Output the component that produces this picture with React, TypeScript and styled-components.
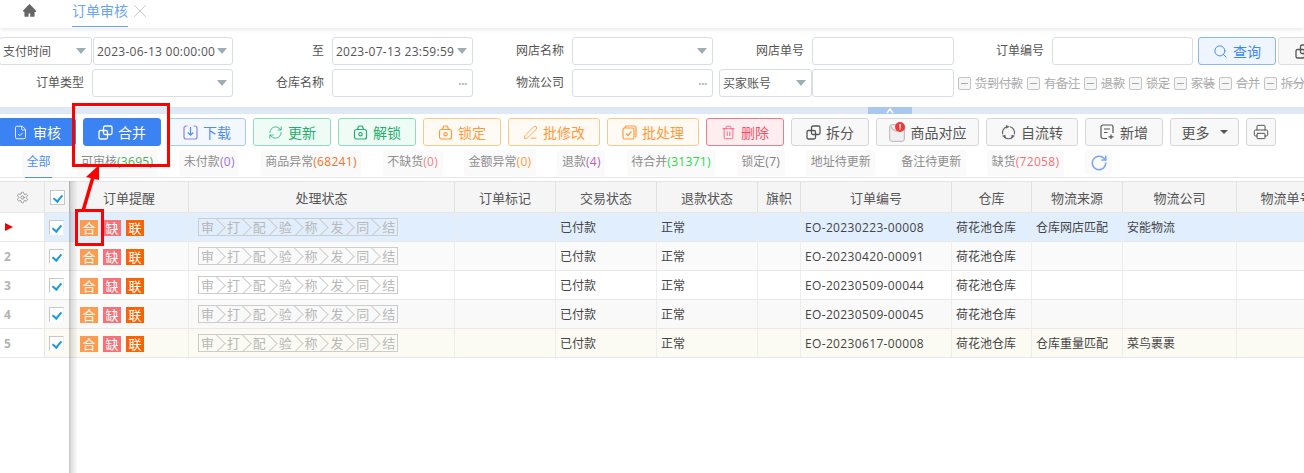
import styled, { createGlobalStyle } from 'styled-components';
import { AiFillHome } from 'react-icons/ai';
import { FileCheck, RefreshCw, PenLine, Trash2, Printer, Search, X, Settings, RotateCw } from 'lucide-react';

const FONT = `"Open Sans", "Noto Sans CJK SC", sans-serif`;
const COLUMNS = '45px 25px 119px 266px 101px 101px 101px 43px 151px 80px 91px 114px 100px';

const HEADERS = ['订单提醒', '处理状态', '订单标记', '交易状态', '退款状态', '旗帜', '订单编号', '仓库', '物流来源', '物流公司', '物流单号'];
const STEPS = ['审', '打', '配', '验', '称', '发', '同', '结'];

const ROWS = [
  { no: '', bg: '#e1eefd', order: 'EO-20230223-00008', source: '仓库网店匹配', company: '安能物流' },
  { no: '2', bg: '#fafafa', order: 'EO-20230420-00091', source: '', company: '' },
  { no: '3', bg: '#ffffff', order: 'EO-20230509-00044', source: '', company: '' },
  { no: '4', bg: '#f9f9f9', order: 'EO-20230509-00045', source: '', company: '' },
  { no: '5', bg: '#fbfbf3', order: 'EO-20230617-00008', source: '仓库重量匹配', company: '菜鸟裹裹' },
];

const TABS = [
  { label: '全部', active: true },
  { label: '可审核', count: '(3695)', color: '#4caf50' },
  { label: '未付款', count: '(0)', color: '#9a6fe0' },
  { label: '商品异常', count: '(68241)', color: '#f5722a' },
  { label: '不缺货', count: '(0)', color: '#f77f86' },
  { label: '金额异常', count: '(0)', color: '#ff9a3c' },
  { label: '退款', count: '(4)', color: '#b55fb5' },
  { label: '待合并', count: '(31371)', color: '#22dd44' },
  { label: '锁定', count: '(7)', color: '#808080' },
  { label: '地址待更新' },
  { label: '备注待更新' },
  { label: '缺货', count: '(72058)', color: '#f77277' },
];

const FLAGS = ['货到付款', '有备注', '退款', '锁定', '家装', '合并', '拆分'];

const TONES = {
  primary: { border: '#3b82f2', bg: '#3b82f2', text: '#ffffff' },
  blue: { border: '#a9c8f6', bg: '#f3f8ff', text: '#4d8ef5' },
  green: { border: '#8fdcbc', bg: '#effcf6', text: '#1fae6f' },
  orange: { border: '#fcc88c', bg: '#fffaf3', text: '#ff9a3c' },
  red: { border: '#ee7b8a', bg: '#ffeef0', text: '#f4506a' },
  plain: { border: '#d6d6d6', bg: '#f8f8f8', text: '#555555' },
};

type Tone = keyof typeof TONES;

const GlobalStyle = createGlobalStyle`
  html, body { margin: 0; padding: 0; background: #fff; overflow: hidden; }
  * { box-sizing: border-box; }
`;

// two overlapping squares, used by 合并 and 拆分
function OverlapIcon() {
  return (
    <svg width="15" height="15" viewBox="0 0 15 15" fill="none" stroke="currentColor" strokeWidth="1.3">
      <rect x="5.5" y="1" width="8.5" height="8.5" rx="1.5" />
      <rect x="1" y="5.5" width="8.5" height="8.5" rx="1.5" />
    </svg>
  );
}

function DownloadIcon() {
  return (
    <svg width="15" height="15" viewBox="0 0 15 15" fill="none" stroke="#8d84e8" strokeWidth="1.2">
      <path d="M4.5 1H3a2 2 0 0 0-2 2v9a2 2 0 0 0 2 2h9a2 2 0 0 0 2-2V3a2 2 0 0 0-2-2h-1.500" />
      <path d="M7.500 2v8M4.800 7.500l2.700 2.700 2.700-2.700" stroke="#4d8ef5" />
    </svg>
  );
}

function LockIcon() {
  return (
    <svg width="15" height="15" viewBox="0 0 15 15" fill="none" stroke="currentColor" strokeWidth="1.2">
      <rect x="1.500" y="4.500" width="12" height="9.500" rx="2" />
      <path d="M4.500 4.500l.8-2.700a1 1 0 0 1 1-.8h2.400a1 1 0 0 1 1 .8l.8 2.700" />
      <circle cx="7.500" cy="9.200" r="1.700" />
    </svg>
  );
}

function BatchIcon() {
  return (
    <svg width="15" height="15" viewBox="0 0 15 15" fill="none" stroke="currentColor" strokeWidth="1.2">
      <path d="M3 3V2.500A1.500 1.500 0 0 1 4.500 1h8A1.500 1.500 0 0 1 14 2.500v8a1.500 1.500 0 0 1-1 1.400" />
      <rect x="1" y="3" width="11" height="11" rx="1.500" />
      <path d="M4 8.500l2 2 3.500-4" />
    </svg>
  );
}

function MatchIcon() {
  return (
    <svg width="17" height="20" viewBox="0 0 17 20">
      <rect x="0.700" y="2.700" width="14.600" height="16.600" rx="2" fill="#efefef" stroke="#b5b5b5" />
      <path d="M2 4c1 4 4 5 7 5" fill="none" stroke="#c5c5c5" strokeWidth="1.500" />
      <circle cx="11" cy="5" r="5" fill="#f03a3a" />
      <rect x="10.400" y="2" width="1.300" height="3.800" fill="#fff" />
      <rect x="10.400" y="6.500" width="1.300" height="1.300" fill="#fff" />
    </svg>
  );
}

function FlowIcon() {
  return (
    <svg width="15" height="15" viewBox="0 0 15 15" fill="none" stroke="#666" strokeWidth="1.100">
      <path d="M6 1.800a6 6 0 0 0-4.300 7.500M3.300 12a6 6 0 0 0 8.400 0M13.300 9.300A6 6 0 0 0 9 1.800" />
      <path d="M7.500 1.800l-2 -1v2zM2.200 11l1.900 1.500-.1-2zM12.800 11l-1.900 1.500.1-2z" />
    </svg>
  );
}

function FilePlusIcon() {
  return (
    <svg width="15" height="16" viewBox="0 0 15 16" fill="none" stroke="currentColor" strokeWidth="1.200">
      <path d="M7 14.500H3a2 2 0 0 1-2-2V3a2 2 0 0 1 2-2h8a2 2 0 0 1 2 2v6" />
      <path d="M4 5h6M4 8.500h3.500M11 10.500v4.500M8.500 12.800h5" />
    </svg>
  );
}

function ToolButton({ tone, width, icon, label, arrow }: { tone: Tone; width: number; icon: React.ReactNode; label?: string; arrow?: boolean }) {
  return (
    <Tool $tone={tone} $width={width}>
      {icon}
      {label && <span>{label}</span>}
      {arrow && <MoreArrow />}
    </Tool>
  );
}

export default function App() {
  return (
    <Page>
      <GlobalStyle />
      <TabBar>
        <HomeTab><AiFillHome size={15} /></HomeTab>
        <OpenTab>订单审核</OpenTab>
        <TabClose><X size={22} strokeWidth={0.9} /></TabClose>
      </TabBar>

      <FilterPanel>
        <FilterRow>
          <SelectBox $width={93} $flat><span>支付时间</span><Caret /></SelectBox>
          <SelectBox $width={140}><DateText>2023-06-13 00:00:00</DateText><Caret /></SelectBox>
          <FieldLabel>至</FieldLabel>
          <SelectBox $width={141}><DateText>2023-07-13 23:59:59</DateText><Caret /></SelectBox>
          <FieldLabel>网店名称</FieldLabel>
          <SelectBox $width={141}><span /><Caret /></SelectBox>
          <FieldLabel>网店单号</FieldLabel>
          <SelectBox $width={142} />
          <FieldLabel $width={98}>订单编号</FieldLabel>
          <SelectBox $width={141} />
          <QueryButton><Search size={15} strokeWidth={1.500} />查询</QueryButton>
          <CutButton><OverlapIcon /></CutButton>
        </FilterRow>
        <FilterRow>
          <FieldLabel $width={92}>订单类型</FieldLabel>
          <SelectBox $width={141}><span /><Caret /></SelectBox>
          <FieldLabel>仓库名称</FieldLabel>
          <SelectBox $width={141}><span /><Dots>•••</Dots></SelectBox>
          <FieldLabel>物流公司</FieldLabel>
          <SelectBox $width={141}><span /><Dots>•••</Dots></SelectBox>
          <BuyerSelect><span>买家账号</span><Caret /></BuyerSelect>
          <SelectBox $width={142} />
          <Flags>
            {FLAGS.map((flag) => (
              <Flag key={flag}><FlagBox />{flag}</Flag>
            ))}
          </Flags>
        </FilterRow>
      </FilterPanel>

      <Splitter>
        <SplitterHandle>
          <svg width="10" height="7" viewBox="0 0 10 7" fill="none" stroke="#fff" strokeWidth="1.500">
            <path d="M2 6l3-4 3 4" />
          </svg>
        </SplitterHandle>
      </Splitter>

      <Toolbar>
        <ToolButton tone="primary" width={78} icon={<FileCheck size={15} strokeWidth={1.400} />} label="审核" />
        <ToolButton tone="primary" width={78} icon={<OverlapIcon />} label="合并" />
        <ToolButton tone="blue" width={78} icon={<DownloadIcon />} label="下载" />
        <ToolButton tone="green" width={78} icon={<RefreshCw size={15} strokeWidth={1.300} />} label="更新" />
        <ToolButton tone="green" width={78} icon={<LockIcon />} label="解锁" />
        <ToolButton tone="orange" width={78} icon={<LockIcon />} label="锁定" />
        <ToolButton tone="orange" width={92} icon={<PenLine size={15} strokeWidth={1.400} />} label="批修改" />
        <ToolButton tone="orange" width={92} icon={<BatchIcon />} label="批处理" />
        <ToolButton tone="red" width={78} icon={<Trash2 size={15} strokeWidth={1.300} />} label="删除" />
        <ToolButton tone="plain" width={78} icon={<OverlapIcon />} label="拆分" />
        <ToolButton tone="plain" width={103} icon={<MatchIcon />} label="商品对应" />
        <ToolButton tone="plain" width={92} icon={<FlowIcon />} label="自流转" />
        <ToolButton tone="plain" width={78} icon={<FilePlusIcon />} label="新增" />
        <ToolButton tone="plain" width={69} icon={null} label="更多" arrow />
        <ToolButton tone="plain" width={30} icon={<Printer size={16} strokeWidth={1.500} />} />
      </Toolbar>

      <TabStrip>
        {TABS.map((tab) => (
          <StatusTab key={tab.label} $active={tab.active}>
            {tab.label}
            {tab.count && <Count $color={tab.color}>{tab.count}</Count>}
          </StatusTab>
        ))}
        <Reload><RotateCw size={18} strokeWidth={2} /></Reload>
      </TabStrip>

      <TableWrap>
        <HeadRow>
          <HeadCell><Settings size={13} strokeWidth={1.500} color="#888" /></HeadCell>
          <HeadCell><CheckBox $solid /></HeadCell>
          {HEADERS.map((title) => (
            <HeadCell key={title}>{title}</HeadCell>
          ))}
        </HeadRow>
        {ROWS.map((row) => (
          <BodyRow key={row.order} $bg={row.bg}>
            <NumberCell>{row.no || <CurrentMark />}</NumberCell>
            <CheckCell><CheckBox /></CheckCell>
            <Cell $gap>
              <Tag $bg="#fd9c50">合</Tag>
              <Tag $bg="#f77277">缺</Tag>
              <Tag $bg="#fb6302">联</Tag>
            </Cell>
            <Cell $pad={9}>
              <Steps>
                {STEPS.map((step) => <Step key={step}>{step}</Step>)}
              </Steps>
            </Cell>
            <Cell />
            <Cell>已付款</Cell>
            <Cell>正常</Cell>
            <Cell />
            <Cell><OrderNo>{row.order}</OrderNo></Cell>
            <Cell>荷花池仓库</Cell>
            <Cell>{row.source}</Cell>
            <Cell>{row.company}</Cell>
            <Cell />
          </BodyRow>
        ))}
        <FrozenShadow />
      </TableWrap>

      <BigMark />
      <SmallMark />
      <ArrowMark width="40" height="60" viewBox="0 0 40 60">
        <path d="M2 46L12 12" stroke="#f00" strokeWidth="3.500" />
        <path d="M18 0L5 12l13 3z" fill="#f00" />
      </ArrowMark>
    </Page>
  );
}

const Page = styled.div`
  position: relative;
  width: 1304px;
  height: 473px;
  overflow: hidden;
  display: flex;
  flex-direction: column;
  background: #fff;
  font-family: ${FONT};
  font-size: 12px;
  color: #555;
`;

const TabBar = styled.div`
  flex: 0 0 28px;
  display: flex;
  align-items: flex-start;
  box-shadow: 0 2px 4px rgba(0, 0, 0, 0.08);
`;

const HomeTab = styled.div`
  margin: 3px 0 0 22px;
  color: #666;
  line-height: 0;
`;

const OpenTab = styled.div`
  margin-left: 35px;
  width: 56px;
  height: 27px;
  line-height: 21px;
  font-size: 14px;
  color: #6ba3f7;
  border-bottom: 1px solid #6ba3f7;
`;

const TabClose = styled.div`
  margin: 0 0 0 1px;
  color: #b5bac0;
  line-height: 0;
`;

const FilterPanel = styled.div`
  flex: 0 0 79px;
  padding-top: 9px;
  display: flex;
  flex-direction: column;
  gap: 4px;
`;

const FilterRow = styled.div`
  display: flex;
  height: 28px;
  white-space: nowrap;
`;

const FieldLabel = styled.div<{ $width?: number }>`
  flex: 0 0 ${(p) => p.$width ?? 99}px;
  padding-right: 8px;
  text-align: right;
  line-height: 28px;
`;

const SelectBox = styled.div<{ $width: number; $flat?: boolean }>`
  flex: 0 0 ${(p) => p.$width}px;
  margin-left: ${(p) => (p.$flat ? '-1px' : '0')};
  margin-right: ${(p) => (p.$flat ? '1px' : '0')};
  display: flex;
  align-items: center;
  justify-content: space-between;
  padding: 0 5px 0 3px;
  border: 1px solid #d9dee3;
  border-radius: 3px;
  color: #555;
  background: #fff;
`;

const DateText = styled.span`
  letter-spacing: 0.26px;
`;

const BuyerSelect = styled(SelectBox).attrs({ $width: 93 })`
  margin-left: 6px;
`;

const Caret = styled.i`
  width: 0;
  height: 0;
  flex-shrink: 0;
  border-left: 5px solid transparent;
  border-right: 5px solid transparent;
  border-top: 6px solid #9cadb5;
`;

const Dots = styled.span`
  font-size: 9px;
  letter-spacing: -0.5px;
  color: #a9b4bb;
`;

const QueryButton = styled.button`
  flex: 0 0 78px;
  margin-left: 5px;
  display: flex;
  align-items: center;
  justify-content: center;
  gap: 5px;
  font: 14px ${FONT};
  color: #3f86f5;
  background: #eef5ff;
  border: 1px solid #8ab8f8;
  border-radius: 3px;
  padding: 0;
`;

const CutButton = styled.button`
  flex: 0 0 78px;
  margin-left: 2px;
  display: flex;
  align-items: center;
  padding: 0 0 0 16px;
  color: #555;
  background: #f8f8f8;
  border: 1px solid #ddd;
  border-radius: 3px;
`;

const Flags = styled.div`
  display: flex;
  align-items: center;
  gap: 4px;
  margin-left: 4px;
`;

const Flag = styled.label`
  display: flex;
  align-items: center;
  gap: 4px;
  color: #a8a8a8;
  text-decoration: line-through;
  text-decoration-color: #c4c4c4;
`;

const FlagBox = styled.i`
  position: relative;
  width: 13px;
  height: 13px;
  border: 1px solid #c4c4c4;
  border-radius: 2px;
  background: #f6f6f6;
  &::after {
    content: '';
    position: absolute;
    left: 2px;
    right: 2px;
    top: 5px;
    height: 1px;
    background: #a8a8a8;
  }
`;

const Splitter = styled.div`
  flex: 0 0 7px;
  display: flex;
  background: #dfe8f5;
`;

const SplitterHandle = styled.div`
  margin-left: 868px;
  width: 44px;
  display: flex;
  align-items: flex-start;
  justify-content: center;
  background: #a9c8f0;
`;

const Toolbar = styled.div`
  flex: 0 0 28px;
  margin: 4px 0 0 -2px;
  display: flex;
  gap: 7px;
`;

const Tool = styled.button<{ $tone: Tone; $width: number }>`
  flex: 0 0 ${(p) => p.$width}px;
  display: flex;
  align-items: center;
  justify-content: center;
  gap: 5px;
  padding: 0;
  font: 14px ${FONT};
  color: ${(p) => TONES[p.$tone].text};
  background: ${(p) => TONES[p.$tone].bg};
  border: 1px solid ${(p) => TONES[p.$tone].border};
  border-radius: 3px;
`;

const MoreArrow = styled.i`
  margin-left: 5px;
  border-left: 4px solid transparent;
  border-right: 4px solid transparent;
  border-top: 4px solid #555;
`;

const TabStrip = styled.div`
  flex: 0 0 28px;
  margin-top: 4px;
  padding-left: 22px;
  display: flex;
  align-items: flex-start;
  gap: 21.500px;
  border-bottom: 1px solid #e5e5e5;
  white-space: nowrap;
`;

const StatusTab = styled.div<{ $active?: boolean }>`
  position: relative;
  height: 26px;
  line-height: 24px;
  padding: 0 4.500px;
  border-radius: 3px;
  background: #fafafa;
  color: ${(p) => (p.$active ? '#4c8ff5' : '#8e8e8e')};
  &::after {
    content: '';
    display: ${(p) => (p.$active ? 'block' : 'none')};
    position: absolute;
    left: 3px;
    right: 3px;
    bottom: -2px;
    height: 1px;
    background: #4c8ff5;
  }
`;

const Count = styled.span<{ $color?: string }>`
  color: ${(p) => p.$color};
  letter-spacing: 0.3px;
`;

const Reload = styled.div`
  width: 27px;
  height: 25px;
  display: flex;
  align-items: center;
  justify-content: center;
  border-radius: 3px;
  background: #fafafa;
  color: #78a5f5;
`;

const TableWrap = styled.div`
  position: relative;
  flex: 1;
  margin-top: 3px;
  min-height: 0;
`;

const HeadRow = styled.div`
  display: grid;
  grid-template-columns: ${COLUMNS};
  height: 32px;
  background: #f5f5f5;
  border-top: 1px solid #e4e4e4;
  border-bottom: 1px solid #e8e8e8;
`;

const HeadCell = styled.div`
  display: flex;
  align-items: center;
  justify-content: center;
  font-size: 13px;
  color: #555;
  border-right: 1px solid #e0e0e0;
  white-space: nowrap;
  overflow: hidden;
`;

const BodyRow = styled.div<{ $bg: string }>`
  display: grid;
  grid-template-columns: ${COLUMNS};
  height: 29px;
  background: ${(p) => p.$bg};
  border-bottom: 1px solid #e8e8e8;
`;

const Cell = styled.div<{ $gap?: boolean; $pad?: number }>`
  display: flex;
  align-items: center;
  gap: ${(p) => (p.$gap ? '5px' : '0')};
  padding-left: ${(p) => p.$pad ?? (p.$gap ? 10 : 4)}px;
  border-right: 1px solid #ededed;
  color: #444;
  white-space: nowrap;
  overflow: hidden;
`;

const OrderNo = styled.span`
  letter-spacing: 0.35px;
`;

const NumberCell = styled.div`
  display: flex;
  align-items: center;
  padding-left: 4px;
  background: #fff;
  border-right: 1px solid #e8e8e8;
  font-weight: 700;
  color: #b4b4b4;
`;

const CurrentMark = styled.i`
  margin-left: 1px;
  border-top: 4px solid transparent;
  border-bottom: 4px solid transparent;
  border-left: 8px solid #f00000;
`;

const CheckCell = styled.div`
  display: flex;
  align-items: center;
  padding-left: 4px;
`;

const CheckBox = styled.i<{ $solid?: boolean }>`
  position: relative;
  display: block;
  width: 15px;
  height: 15px;
  background: #fff;
  border: 1px solid #c8c8c8;
  border-right-color: ${(p) => (p.$solid ? '#c8c8c8' : '#eeeeee')};
  border-bottom-color: ${(p) => (p.$solid ? '#c8c8c8' : '#ffffff')};
  &::after {
    content: '';
    position: absolute;
    left: 4px;
    top: 2px;
    width: 4px;
    height: 7px;
    border-right: 2px solid #1d9be0;
    border-bottom: 2px solid #1d9be0;
    transform: rotate(40deg);
  }
`;

const Tag = styled.span<{ $bg: string }>`
  width: 18px;
  height: 16px;
  margin-top: 1px;
  line-height: 16px;
  text-align: center;
  font-size: 13px;
  color: #fff;
  background: ${(p) => p.$bg};
`;

const Steps = styled.div`
  display: flex;
  width: 200px;
  height: 18px;
  border: 1px solid #cccccc;
  overflow: hidden;
`;

const Step = styled.span`
  position: relative;
  flex: 0 0 25.900px;
  padding-left: 2px;
  line-height: 16px;
  font-size: 13px;
  color: #b8b8b8;
  &:not(:last-child)::after {
    content: '';
    position: absolute;
    right: 2px;
    top: 2px;
    width: 12px;
    height: 12px;
    border-top: 1px solid #cccccc;
    border-right: 1px solid #cccccc;
    transform: rotate(45deg);
  }
`;

const FrozenShadow = styled.div`
  position: absolute;
  left: 69px;
  top: 0;
  bottom: 0;
  width: 9px;
  background: linear-gradient(to right, rgba(0, 0, 0, 0.24), rgba(0, 0, 0, 0.12) 25%, rgba(0, 0, 0, 0));
`;

const BigMark = styled.div`
  position: absolute;
  left: 72px;
  top: 103px;
  width: 98px;
  height: 64px;
  border: 3px solid #f00;
`;

const SmallMark = styled.div`
  position: absolute;
  left: 75px;
  top: 209px;
  width: 29px;
  height: 37px;
  border: 3px solid #f00;
`;

const ArrowMark = styled.svg`
  position: absolute;
  left: 81px;
  top: 165px;
`;
